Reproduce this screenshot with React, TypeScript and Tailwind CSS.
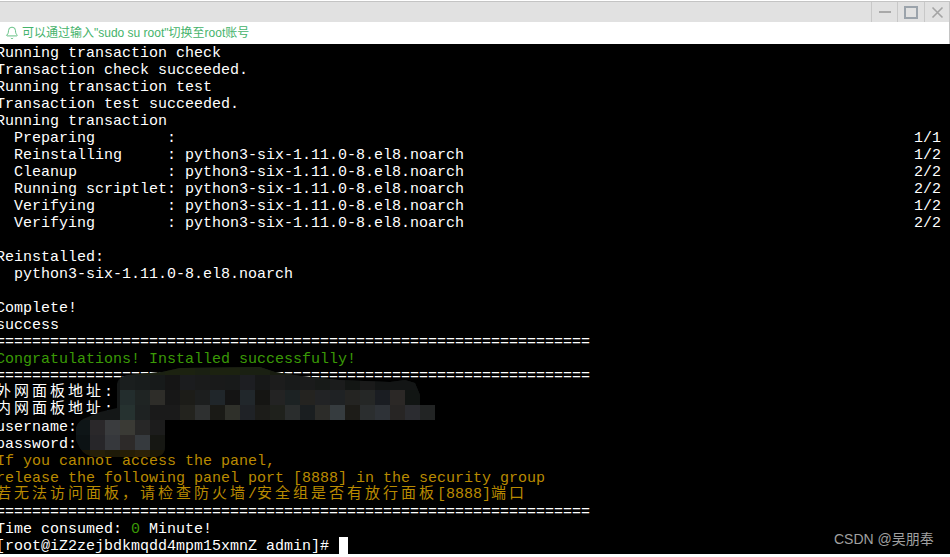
import { Bell } from "lucide-react";

const RULE = "=".repeat(66);
const PKG = "python3-six-1.11.0-8.el8.noarch";

// terminal output, one entry per 17px row
const lines: { text: string; right?: string; color?: string; cjk?: boolean }[] = [
  { text: "Running transaction check" },
  { text: "Transaction check succeeded." },
  { text: "Running transaction test" },
  { text: "Transaction test succeeded." },
  { text: "Running transaction" },
  { text: "  Preparing        :", right: "1/1" },
  { text: `  Reinstalling     : ${PKG}`, right: "1/2" },
  { text: `  Cleanup          : ${PKG}`, right: "2/2" },
  { text: `  Running scriptlet: ${PKG}`, right: "2/2" },
  { text: `  Verifying        : ${PKG}`, right: "1/2" },
  { text: `  Verifying        : ${PKG}`, right: "2/2" },
  { text: "" },
  { text: "Reinstalled:" },
  { text: `  ${PKG}` },
  { text: "" },
  { text: "Complete!" },
  { text: "success" },
  { text: RULE },
  { text: "Congratulations! Installed successfully!", color: "text-[#3a9a06]" },
  { text: RULE },
  { text: "外网面板地址:", cjk: true },
  { text: "内网面板地址:", cjk: true },
  { text: "username:" },
  { text: "password:" },
  { text: "If you cannot access the panel,", color: "text-[#b98a00]" },
  { text: "release the following panel port [8888] in the security group", color: "text-[#b98a00]" },
];

// pixelated area over the panel address and credentials
const MOSAIC: [number, number, string[]][] = [
  [120, 360, ["#1a2012", "#1a2012", "#1a2012", "#1c2210", "#1c2210", "#1a2012", "#1c2210", "#1c2210", "#1a2012", "#1a2012", "#181c10", "#181c10"]],
  [120, 375, ["#1a1e1e", "#181c1c", "#171a1a", "#151515", "#1b1c1e", "#1a1b1b", "#191a1a", "#181a1a", "#1d1e22", "#171818", "#1c1c1c", "#181a1a", "#1a1b1b", "#171a18", "#1b1c1c", "#131614", "#1a1a1a", "#131515", "#131515", "#131515"]],
  [120, 390, ["#232d2d", "#1f2423", "#2e2d29", "#171717", "#1c1c18", "#1c1e1e", "#20262a", "#141414", "#21272b", "#151513", "#232323", "#1c2223", "#242320", "#222325", "#1f2224", "#242422", "#252726", "#1a1d22", "#2b2826", "#111513"]],
  [120, 405, ["#263230", "#1e2222", "#1a1a1a", "#1a1a1a", "#23231e", "#2e3030", "#1a1a16", "#2f302a", "#1f2226", "#1c1c19", "#1f211c", "#2a2d2d", "#1a1e20", "#2c2c29", "#363c3f", "#1d1c18", "#2b2e2f", "#2e3237", "#272524", "#2b2c30", "#222424"]],
  [75, 420, ["#0e1517", "#2a282a", "#3a3c3e", "#3a3a35", "#272727", "#1c1c1c"]],
  [75, 435, ["#0c1214", "#272629", "#36383c", "#2d2a29", "#363a3e", "#161713"]],
  [75, 450, ["#1a1606", "#241e08", "#1e1a08", "#241c06", "#2a2008", "#1a1606"]],
];

const BLOB =
  "M117 384Q118 377 128 375L162 372L180 368L260 367L275 372L301 376L340 380L390 382L405 380L415 383L420 395L420 405L435 405L435 420L165 420L165 447Q165 456 155 457L95 457Q85 456 80 448L76 440L76 428Q78 420 88 417L100 412L117 408Z";

function CjkLine({ text }: { text: string }) {
  // wide glyphs take two 9px cells
  return (
    <>
      {text.split(/(\[8888\]|:|\/)/).map((part, i) =>
        /^(\[8888\]|:|\/)$/.test(part) ? <span key={i}>{part}</span> : <span key={i} className="tracking-[3px]">{part}</span>
      )}
    </>
  );
}

function TermRow({ children, color = "text-white", right, cjk }: { children: React.ReactNode; color?: string; right?: string; cjk?: boolean }) {
  return (
    <div className={`flex h-[17px] justify-between whitespace-pre pr-[9px] ${cjk ? "leading-[17px]" : "leading-[19px]"} ${color}`}>
      <span>{children}</span>
      {right && <span>{right}</span>}
    </div>
  );
}

export default function App() {
  return (
    <div className="relative flex h-[557px] w-[950px] flex-col overflow-hidden bg-white">
      {/* Window header */}
      <div className="mt-px flex h-[21px] items-stretch justify-end border-t border-r border-[#c4c4c4] bg-[#e1e1e1]">
        <div className="flex w-[26px] items-center justify-center border-l border-[#c8c8c8]">
          <svg width="14" height="4" viewBox="0 0 14 4"><rect x="1" y="1" width="12" height="2" fill="#a8a8a8" /></svg>
        </div>
        <div className="flex w-[27px] items-center justify-center border-l border-[#c8c8c8]">
          <svg width="14" height="13" viewBox="0 0 14 13"><rect x="1" y="1" width="12" height="11" fill="none" stroke="#9ba3ab" strokeWidth="2" /></svg>
        </div>
        <div className="flex w-[25px] items-center justify-center border-l border-[#c8c8c8]">
          <svg width="13" height="13" viewBox="0 0 13 13"><path d="M1.5 1.5 11.5 11.5M11.5 1.5 1.5 11.5" stroke="#a4a4a4" strokeWidth="1.6" /></svg>
        </div>
      </div>

      {/* Notice */}
      <div className="flex h-[22px] items-center gap-[3px] border-r border-[#c4c4c4] pl-[5px] font-['Liberation_Sans','Noto_Sans_CJK_SC',sans-serif] text-[12px] text-[#45b36b]">
        <Bell size={14} strokeWidth={1.4} className="text-[#45b36b]" />
        <span>可以通过输入"sudo su root"切换至root账号</span>
      </div>

      {/* Terminal */}
      <div className="relative h-[510px] overflow-hidden bg-black font-['Liberation_Mono','Noto_Sans_CJK_SC',monospace] text-[15px] text-white [&>div]:-ml-[4px]">
        {lines.map((line, i) => (
          <TermRow key={i} color={line.color} right={line.right} cjk={line.cjk}>
            {line.cjk ? <CjkLine text={line.text} /> : line.text}
          </TermRow>
        ))}
        <TermRow color="text-[#b98a00]" cjk>
          <CjkLine text="若无法访问面板，请检查防火墙/安全组是否有放行面板[8888]端口" />
        </TermRow>
        <TermRow>{RULE}</TermRow>
        <TermRow>
          Time consumed: <span className="text-[#3a9a06]">0</span> Minute!
        </TermRow>
        <TermRow>
          [root@iZ2zejbdkmqdd4mpm15xmnZ admin]# <span className="ml-px inline-block h-[17px] w-[9px] bg-white align-top" />
        </TermRow>
      </div>

      {/* Mosaic */}
      <svg className="absolute left-0 top-0" width="950" height="557" viewBox="0 0 950 557">
        <defs>
          <clipPath id="blob">
            <path d={BLOB} />
          </clipPath>
        </defs>
        <path d={BLOB} fill="#141717" />
        <g clipPath="url(#blob)">
          {MOSAIC.map(([x0, y, cells]) =>
            cells.map((fill, i) => <rect key={`${y}-${i}`} x={x0 + i * 15} y={y} width="15" height="15" fill={fill} />)
          )}
        </g>
      </svg>

      {/* Watermark */}
      <span className="absolute left-[834px] top-[529px] font-['Liberation_Sans','Noto_Sans_CJK_SC',sans-serif] text-[14px] leading-[20px] text-[#a0a0a0]">
        CSDN @吴朋奉
      </span>
    </div>
  );
}
